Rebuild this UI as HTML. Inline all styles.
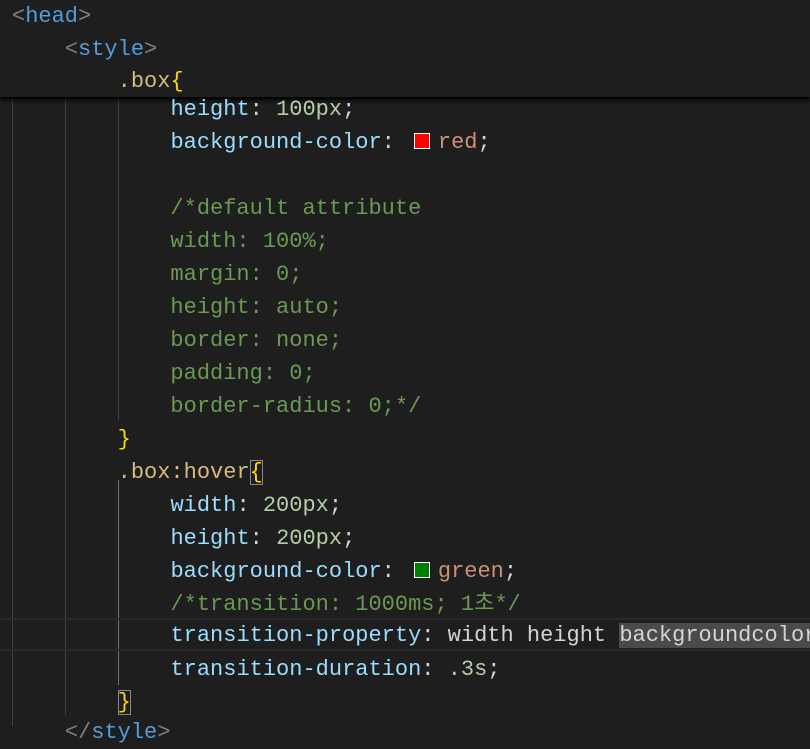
<!DOCTYPE html>
<html><head><meta charset="utf-8"><style>
body{margin:0;width:810px;height:726px;background:#1e1e1e;overflow:hidden;position:relative;font-family:"Liberation Mono","Noto Sans CJK KR",monospace;font-size:22px;}
.l{position:absolute;left:12px;height:33px;line-height:33px;white-space:pre;color:#d4d4d4;}
.t{color:#808080}.n{color:#569cd6}.s{color:#d7ba7d}.b{color:#ffd700}.p{color:#9cdcfe}.num{color:#b5cea8}.v{color:#ce9178}.c{color:#6a9955}
.g{position:absolute;width:1px;background:#404040}
.sw{display:inline-block;width:14px;height:14px;border:1px solid #fff;margin:0 8px 0 6px;vertical-align:-1px}
.sel{background:#4a4a4a}
.bm{outline:1px solid #888;outline-offset:-1px}
#hdr{position:absolute;left:0;top:0;width:810px;height:97px;background:#1e1e1e;box-shadow:0 3px 4px #000;z-index:2}
</style></head><body>
<div class="g" style="left:12px;top:97px;height:629px"></div>
<div class="g" style="left:65px;top:97px;height:618px"></div>
<div class="g" style="left:118px;top:97px;height:323px"></div>
<div class="g" style="left:118px;top:480px;height:205px;background:#707070"></div>
<div style="position:absolute;left:0;top:618px;width:810px;height:33px;border-top:2px solid #282828;border-bottom:2px solid #282828;box-sizing:border-box"></div>
<div id="hdr">
<div class="l" style="top:0px"><span class="t">&lt;</span><span class="n">head</span><span class="t">&gt;</span></div>
<div class="l" style="top:33px">    <span class="t">&lt;</span><span class="n">style</span><span class="t">&gt;</span></div>
<div class="l" style="top:65px">        <span class="s">.box</span><span class="b">{</span></div>
</div>
<div class="l" style="top:93px;z-index:3">            <span class="p">height</span>: <span class="num">100px</span>;</div>
<div class="l" style="top:126px">            <span class="p">background-color</span>:<span class="sw" style="background:#f00;margin-left:19px"></span><span class="v">red</span>;</div>
<div class="l c" style="top:192px">            /*default attribute</div>
<div class="l c" style="top:225px">            width: 100%;</div>
<div class="l c" style="top:258px">            margin: 0;</div>
<div class="l c" style="top:291px">            height: auto;</div>
<div class="l c" style="top:324px">            border: none;</div>
<div class="l c" style="top:357px">            padding: 0;</div>
<div class="l c" style="top:390px">            border-radius: 0;*/</div>
<div class="l" style="top:423px">        <span class="b">}</span></div>
<div class="l" style="top:456px">        <span class="s">.box:hover</span><span class="b bm">{</span></div>
<div class="l" style="top:489px">            <span class="p">width</span>: <span class="num">200px</span>;</div>
<div class="l" style="top:522px">            <span class="p">height</span>: <span class="num">200px</span>;</div>
<div class="l" style="top:555px">            <span class="p">background-color</span>:<span class="sw" style="background:#008000;margin-left:19px"></span><span class="v">green</span>;</div>
<div class="l c" style="top:588px">            /*transition: 1000ms; 1초*/</div>
<div class="l" style="top:619px">            <span class="p">transition-property</span>: width height <span class="sel">backgroundcolor;</span></div>
<div class="l" style="top:653px">            <span class="p">transition-duration</span>: <span class="num">.3s</span>;</div>
<div class="l" style="top:686px">        <span class="b bm">}</span></div>
<div class="l" style="top:716px">    <span class="t">&lt;/</span><span class="n">style</span><span class="t">&gt;</span></div>
</body></html>
